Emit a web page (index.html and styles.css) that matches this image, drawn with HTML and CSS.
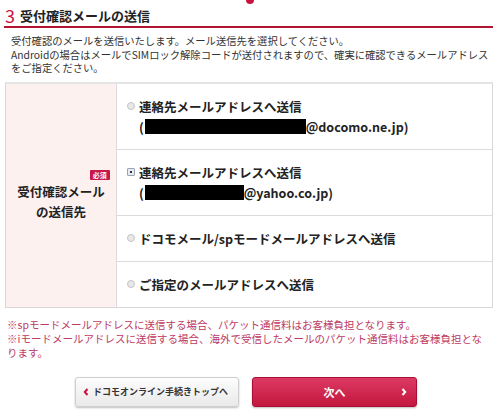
FILE: index.html
```html
<html>
    <head>
        <meta charset="utf-8">
        <link rel="stylesheet" href="styles.css">
    </head>
    <body>
        <div class="step-arrow"></div>
        <h2 class="title"><span class="num">3</span>受付確認メールの送信</h2>
        <p class="lead">受付確認のメールを送信いたします。メール送信先を選択してください。<br>Androidの場合はメールでSIMロック解除コードが送付されますので、確実に確認できるメールアドレスをご指定ください。</p>

        <div class="form">
            <div class="label">
                <div class="label-inner">
                    <span class="badge">必須</span>
                    <div class="label-text">受付確認メール<br>の送信先</div>
                </div>
            </div>
            <div class="options">
                <div class="option tall">
                    <div class="line"><span class="radio"></span>連絡先メールアドレスへ送信</div>
                    <div class="line sub">(<span class="mask m1"></span>@docomo.ne.jp)</div>
                </div>
                <div class="option tall">
                    <div class="line"><span class="radio checked"></span>連絡先メールアドレスへ送信</div>
                    <div class="line sub">(<span class="mask m2"></span>@yahoo.co.jp)</div>
                </div>
                <div class="option">
                    <div class="line"><span class="radio"></span>ドコモメール/spモードメールアドレスへ送信</div>
                </div>
                <div class="option">
                    <div class="line"><span class="radio"></span>ご指定のメールアドレスへ送信</div>
                </div>
            </div>
        </div>

        <p class="notes">※spモードメールアドレスに送信する場合、パケット通信料はお客様負担となります。<br>※iモードメールアドレスに送信する場合、海外で受信したメールのパケット通信料はお客様負担となります。</p>

        <div class="buttons">
            <a class="btn back">
                <svg class="chev" width="6" height="8" viewBox="0 0 6 8"><path d="M4.5 1 L1.8 4 L4.5 7" fill="none" stroke="#c8143c" stroke-width="2"/></svg>
                ドコモオンライン手続きトップへ
            </a>
            <a class="btn next">次へ
                <svg class="chev" width="6" height="8" viewBox="0 0 6 8"><path d="M1.5 1 L4.2 4 L1.5 7" fill="none" stroke="#fff" stroke-width="2"/></svg>
            </a>
        </div>
    </body>
</html>
```

FILE: styles.css
```css
body
{
    margin: 0;
    padding: 0 4px;
    font-family: "Noto Sans CJK JP", "Liberation Sans", sans-serif;
    color: #222;
    background: #fff;
}
.step-arrow
{
    width: 8px;
    height: 4px;
    margin: 0 auto;
    background: #c8143c;
    border-radius: 0 0 5px 5px;
    position: relative;
    left: 1px;
}
.title
{
    margin: 0;
    height: 22px;
    display: flex;
    align-items: center;
    font-size: 13px;
    font-weight: bold;
    border-bottom: 2px solid #b3142f;
}
.title .num
{
    color: #c8143c;
    font-size: 18px;
    font-weight: normal;
    margin: 0 5px 0 1px;
}
.lead
{
    margin: 6px 3px 0 7px;
    font-size: 10.3px;
    line-height: 13.5px;
    color: #333;
}
.form
{
    display: flex;
    margin: 7px 0 0 1px;
    border: 1px solid #d8d8d8;
    border-top: 2px solid #e4e4e4;
}
.label
{
    width: 110px;
    flex: none;
    background: #fdf1f0;
    border-right: 1px solid #dcdcdc;
    display: flex;
    align-items: center;
    justify-content: center;
}
.label-inner
{
    display: flex;
    flex-direction: column;
    margin-top: 2px;
}
.badge
{
    align-self: flex-end;
    margin-right: -5px;
    background: #c8184a;
    color: #fff;
    font-size: 7px;
    font-weight: bold;
    line-height: 10px;
    padding: 0 3px;
    border-radius: 1px;
}
.label-text
{
    font-size: 12.5px;
    font-weight: bold;
    line-height: 20px;
    text-align: center;
    margin-top: 2px;
}
.options
{
    flex: 1;
}
.option
{
    height: 45px;
    padding-left: 10px;
    display: flex;
    flex-direction: column;
    justify-content: center;
    border-top: 1px solid #dcdcdc;
}
.option:first-child
{
    border-top: none;
}
.option.tall
{
    height: 65px;
}
.line
{
    display: flex;
    align-items: center;
    height: 20px;
    font-size: 12.5px;
    font-weight: bold;
}
.line.sub
{
    padding-left: 12px;
}
.radio
{
    width: 6px;
    height: 6px;
    border: 1px solid #c4c4c4;
    background: #e8e8e8;
    border-radius: 50%;
    margin-right: 4px;
}
.radio.checked
{
    border-radius: 1px;
    border-color: #9aa4b4;
    background: #e6ebf2;
    position: relative;
}
.radio.checked::after
{
    content: "";
    position: absolute;
    left: 2px;
    top: 2px;
    width: 2px;
    height: 2px;
    background: #334;
}
.mask
{
    display: inline-block;
    height: 15px;
    background: #000;
    margin-left: 1px;
}
.m1
{
    width: 161px;
}
.m2
{
    width: 99px;
}
.notes
{
    margin: 10px 3px 0 3px;
    font-size: 10.5px;
    line-height: 14px;
    color: #bd3a62;
}
.buttons
{
    display: flex;
    justify-content: center;
    gap: 13px;
    margin-top: 17px;
    padding-right: 5px;
}
.btn
{
    height: 30px;
    display: flex;
    align-items: center;
    border-radius: 3px;
    font-weight: bold;
    box-sizing: border-box;
    box-shadow: 0 1px 2px rgba(0,0,0,0.25);
}
.btn.back
{
    width: 164px;
    padding-left: 7px;
    border: 1px solid #cfcfcf;
    background: linear-gradient(#fdfdfd, #e9e9e9);
    color: #333;
    font-size: 9px;
}
.btn.back .chev
{
    margin-right: 4px;
}
.btn.next
{
    width: 165px;
    justify-content: center;
    position: relative;
    border: 1px solid #a80f36;
    background: linear-gradient(#dc3a63, #c3173f);
    color: #fff;
    font-size: 11px;
}
.btn.next .chev
{
    position: absolute;
    right: 9px;
}
```
